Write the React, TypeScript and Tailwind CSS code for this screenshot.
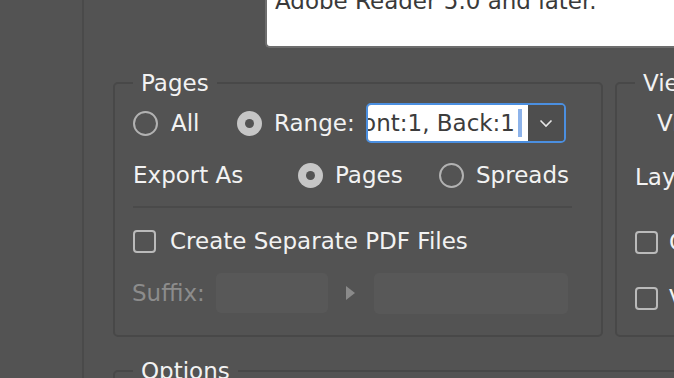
import React from "react";

const font = { fontFamily: '"DejaVu Sans", "Liberation Sans", sans-serif' };

const Radio: React.FC<{ checked?: boolean }> = ({ checked }) =>
	checked ? (
		<span className="flex w-[25px] h-[25px] shrink-0 items-center justify-center rounded-full bg-[#c6c6c6]">
			<span className="w-[9px] h-[9px] rounded-full bg-[#535353]" />
		</span>
	) : (
		<span className="w-[25px] h-[25px] shrink-0 rounded-full border-2 border-[#b2b2b2]" />
	);

const Checkbox: React.FC = () => (
	<span className="w-[23px] h-[23px] shrink-0 rounded-[4px] border-2 border-[#bababa]" />
);

const App: React.FC = () => {
	return (
		<div
			className="flex w-[674px] h-[378px] overflow-hidden bg-[#535353] text-[23px] text-[#f2f2f2]"
			style={font}
		>
			<div className="w-[84px] shrink-0 border-r-2 border-[#4a4a4a]" />
			<div className="flex flex-col shrink-0 w-[700px]">
				<div className="ml-[181px] h-[48px] shrink-0 overflow-hidden rounded-bl-[5px] border-l-2 border-b-2 border-[#6e6e6e] bg-white">
					<p className="mt-[-13px] pl-[8px] leading-[28px] whitespace-nowrap text-[#3a3a3a]">
						Adobe Reader 5.0 and later.
					</p>
				</div>

				<div className="mt-[21px] ml-[29px] flex shrink-0 gap-[12px]">
					<fieldset className="w-[490px] shrink-0 rounded-[5px] border-2 border-[#484848] pl-[18px] pr-[29px] pb-[21px]">
						<legend className="px-[8px] leading-[28px]">Pages</legend>

						<div className="mt-[6px] flex h-[40px] items-center">
							<div className="flex w-[104px] items-center">
								<Radio />
								<span className="ml-[13px]">All</span>
							</div>
							<Radio checked />
							<span className="ml-[12px] w-[92px]">Range:</span>
							<div className="flex h-[40px] w-[200px] overflow-hidden rounded-[5px] border-2 border-[#4b8fe0]">
								<div className="flex flex-1 items-center justify-end overflow-hidden bg-white pr-[6px] whitespace-nowrap text-[#3c3c3c]">
									<span>Front:1, Back:1</span>
									<span className="ml-[3px] h-[28px] w-[4px] shrink-0 bg-[#8db3ea]" />
								</div>
								<div className="flex w-[36px] items-center justify-center bg-[#4e4e4e]">
									<svg width="14" height="9" viewBox="0 0 14 9" fill="none">
										<path d="M1.5 1.5L7 7L12.5 1.5" stroke="#e6e6e6" strokeWidth="1.6" />
									</svg>
								</div>
							</div>
						</div>

						<div className="mt-[17px] flex h-[30px] items-center">
							<span className="w-[165px]">Export As</span>
							<div className="flex w-[141px] items-center">
								<Radio checked />
								<span className="ml-[12px]">Pages</span>
							</div>
							<Radio />
							<span className="ml-[12px]">Spreads</span>
						</div>

						<div className="mt-[16px] h-[2px] bg-[#4a4a4a]" />

						<div className="mt-[19px] flex h-[28px] items-center">
							<Checkbox />
							<span className="ml-[14px] whitespace-nowrap">Create Separate PDF Files</span>
						</div>

						<div className="mt-[18px] flex h-[40px] items-center">
							<span className="w-[84px] text-[#8c8c8c] -ml-[1px]">Suffix:</span>
							<div className="h-[40px] w-[112px] rounded-[5px] bg-[#585858]" />
							<svg className="ml-[18px]" width="9" height="14" viewBox="0 0 9 14">
								<path d="M0 0L9 7L0 14Z" fill="#8a8a8a" />
							</svg>
							<div className="ml-[19px] h-[41px] w-[194px] rounded-[5px] bg-[#585858]" />
						</div>
					</fieldset>

					<fieldset className="w-[220px] shrink-0 rounded-[5px] border-2 border-[#484848] pl-[18px] pb-[23px]">
						<legend className="px-[8px] leading-[28px]">View</legend>
						<div className="mt-[6px] flex h-[40px] items-center pl-[22px] whitespace-nowrap">View:</div>
						<div className="mt-[19px] flex h-[30px] items-center whitespace-nowrap">Layout:</div>
						<div className="mt-[36px] flex h-[28px] items-center">
							<Checkbox />
							<span className="ml-[11px] whitespace-nowrap">Open in Full Screen Mode</span>
						</div>
						<div className="mt-[28px] flex h-[28px] items-center">
							<Checkbox />
							<span className="ml-[11px] whitespace-nowrap">View PDF after Exporting</span>
						</div>
					</fieldset>
				</div>

				<fieldset className="mt-[20px] ml-[29px] h-[60px] w-[700px] shrink-0 rounded-[5px] border-2 border-[#484848] pl-[18px]">
					<legend className="px-[8px] leading-[28px]">Options</legend>
				</fieldset>
			</div>
		</div>
	);
};

export default App;
